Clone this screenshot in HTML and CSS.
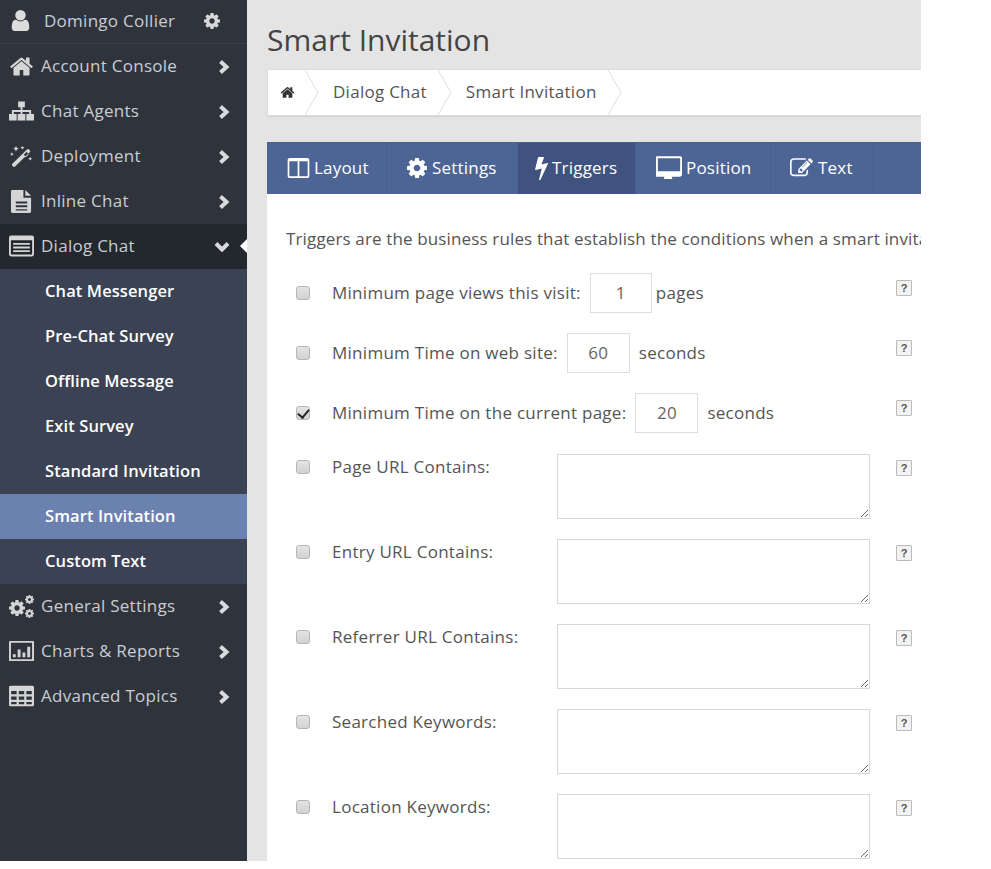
FILE: index.html
```html
<!DOCTYPE html>
<html lang="en">
<head>
<meta charset="utf-8">
<title>Smart Invitation</title>
<link rel="stylesheet" href="styles.css">
</head>
<body>
<svg class="defs" width="0" height="0" aria-hidden="true">
  <symbol id="i-right" viewBox="0 0 13 14"><path class="chevron" d="M2.500 1.500 8.500 7 2.500 12.500"/></symbol>
  <symbol id="i-down" viewBox="0 0 16 11"><path class="chevron" d="M2 2.500 8 8.500 14 2.500"/></symbol>
  <symbol id="i-home" viewBox="0 0 1792 1792"><path d="M1472 992v480q0 26-19 45t-45 19h-384v-384h-256v384h-384q-26 0-45-19t-19-45v-480q0-1 .5-3t.5-3l575-474 575 474q1 2 1 6zm223-69l-62 74q-8 9-21 11h-3q-13 0-21-7l-692-577-692 577q-12 8-24 7-13-2-21-11l-62-74q-8-10-7-23.500t11-21.500l719-599q32-26 76-26t76 26l244 204v-195q0-14 9-23t23-9h192q14 0 23 9t9 23v408l219 182q10 8 11 21.500t-7 23.500z"/></symbol>
  <symbol id="i-cog" viewBox="128 128 1536 1536"><path d="M1152 896q0-106-75-181t-181-75-181 75-75 181 75 181 181 75 181-75 75-181zm512-109v222q0 12-8 23t-20 13l-185 28q-19 54-39 91 35 50 107 138 10 12 10 25t-9 23q-27 37-99 108t-94 71q-12 0-26-9l-138-108q-44 23-91 38-16 136-29 186-7 28-36 28h-222q-14 0-24.500-8.500t-11.500-21.500l-28-184q-49-16-90-37l-141 107q-10 9-25 9-14 0-25-11-126-114-165-168-7-10-7-23 0-12 8-23 15-21 51-66.500t54-70.500q-27-50-41-99l-183-27q-13-2-21-12.500t-8-23.500v-222q0-12 8-23t19-13l186-28q14-46 39-92-40-57-107-138-10-12-10-24 0-10 9-23 26-36 98.500-107.500t94.500-71.500q13 0 26 10l138 107q44-23 91-38 16-136 29-186 7-28 36-28h222q14 0 24.500 8.500t11.500 21.500l28 184q49 16 90 37l142-107q9-9 24-9 13 0 25 10 129 119 165 170 7 8 7 22 0 12-8 23-15 21-51 66.500t-54 70.500q26 50 41 98l183 28q13 2 21 12.500t8 23.500z"/></symbol>
  <symbol id="i-user" viewBox="128 128 1536 1536"><path d="M1536 1399q0 109-62.500 187t-150.500 78h-854q-88 0-150.500-78t-62.500-187q0-85 8.500-160.500t31.500-152 58.500-131 94-89 134.500-34.500q131 128 313 128t313-128q76 0 134.500 34.500t94 89 58.500 131 31.500 152 8.500 160.500zm-256-887q0 159-112.500 271.500t-271.500 112.500-271.500-112.500-112.500-271.500 112.500-271.500 271.500-112.500 271.500 112.500 112.500 271.500z"/></symbol>
  <symbol id="i-bolt" viewBox="440 64 910 1664"><path d="M1333 566q18 20 7 44l-540 1157q-13 25-42 25-4 0-14-2-17-5-25.500-19t-4.500-30l197-808-406 101q-4 1-12 1-18 0-31-11-18-15-13-39l201-825q4-14 16-23t28-9h328q19 0 32 12.500t13 29.500q0 8-5 18l-171 463 396-98q8-2 12-2 19 0 34 15z"/></symbol>
  <symbol id="i-desktop" viewBox="0 128 1792 1536"><path d="M1664 1120v-832q0-13-9.500-22.500t-22.500-9.500h-1472q-13 0-22.500 9.500t-9.500 22.500v832q0 13 9.500 22.500t22.500 9.500h1472q13 0 22.500-9.500t9.500-22.500zm128-832v1088q0 66-47 113t-113 47h-544q0 37 16 77.500t32 71 16 43.500q0 26-19 45t-45 19h-512q-26 0-45-19t-19-45q0-14 16-44t32-70 16-78h-544q-66 0-113-47t-47-113v-1088q0-66 47-113t113-47h1632q66 0 113 47t47 113z"/></symbol>
  <symbol id="i-sitemap" viewBox="0 0 26 20"><path d="M9.500 0h7v6h-7zM12 6h2v3h9v4h-2v-2h-7v2h-2v-2H5v2H3V9h9zM0 13h8v7H0zM9 13h8v7H9zM18 13h8v7h-8z"/></symbol>
  <symbol id="i-magic" viewBox="0 0 24 24"><path d="M2 20.500 18 5a1.600 1.600 0 0 1 2.200 0l.8.800a1.600 1.600 0 0 1 0 2.200L5 23.500a1.500 1.500 0 0 1-2.100 0l-.9-.9a1.500 1.500 0 0 1 0-2.100zM14.500 10.500l2.500 2.500 3-3-2.500-2.500zM6 1l1 2 2 1-2 1-1 2-1-2-2-1 2-1zM1.500 8l.7 1.300 1.300.7-1.300.7-.7 1.300-.7-1.300L-.5 10l1.300-.7zM13 1l.7 1.300L15 3l-1.300.7L13 5l-.7-1.300L11 3l1.300-.7zM21.500 13l.7 1.300 1.300.7-1.300.7-.7 1.300-.7-1.300-1.300-.7 1.300-.7z"/></symbol>
  <symbol id="i-file" viewBox="0 0 22 24"><path fill-rule="evenodd" d="M1.500 0H13v8h8v14.500a1.500 1.500 0 0 1-1.500 1.500h-18A1.500 1.500 0 0 1 0 22.500v-21A1.500 1.500 0 0 1 1.500 0zM5 12v2h12v-2zM5 16v2h12v-2zM5 20v1.500h12V20zM15 0l6 6h-6z"/></symbol>
  <symbol id="i-list" viewBox="0 0 24 20"><path fill-rule="evenodd" d="M2 0h20a2 2 0 0 1 2 2v16a2 2 0 0 1-2 2H2a2 2 0 0 1-2-2V2a2 2 0 0 1 2-2zM1.800 4.500v13.200c0 .3.200.5.500.5h19.400c.3 0 .5-.2.500-.5V4.500zM4 7h16v1.800H4zM4 10.500h16v1.800H4zM4 14h16v1.800H4z"/></symbol>
  <symbol id="i-chart" viewBox="0 0 26 21"><path fill-rule="evenodd" d="M1 0h24a1 1 0 0 1 1 1v19a1 1 0 0 1-1 1H1a1 1 0 0 1-1-1V1a1 1 0 0 1 1-1zM2 2v17h22V2zM4 14h3v3H4zM9 9h3v8H9zM14 12h3v5h-3zM19 6h3v11h-3z"/></symbol>
  <symbol id="i-table" viewBox="0 0 23 19"><path fill-rule="evenodd" d="M1.500 0h20A1.500 1.500 0 0 1 23 1.500v16a1.500 1.500 0 0 1-1.500 1.500h-20A1.500 1.500 0 0 1 0 17.500v-16A1.500 1.500 0 0 1 1.500 0zM2 5v3h5V5zM9 5v3h5V5zM16 5v3h5V5zM2 10v3h5v-3zM9 10v3h5v-3zM16 10v3h5v-3zM2 15v2h5v-2zM9 15v2h5v-2zM16 15v2h5v-2z"/></symbol>
  <symbol id="i-columns" viewBox="64 128 1664 1536"><path d="M224 1536h608v-1152h-640v1120q0 13 9.500 22.500t22.500 9.500zm1376-32v-1120h-640v1152h608q13 0 22.500-9.500t9.500-22.500zm128-1216v1216q0 66-47 113t-113 47h-1344q-66 0-113-47t-47-113v-1216q0-66 47-113t113-47h1344q66 0 113 47t47 113z"/></symbol>
  <symbol id="i-edit" viewBox="0 128 1792 1536"><path d="M888 1184l116-116-152-152-116 116v56h96v96h56zm440-720q-16-16-33 1l-350 350q-17 17-1 33t33-1l350-350q17-17 1-33zm80 594v190q0 119-84.500 203.500t-203.500 84.500h-832q-119 0-203.500-84.500t-84.500-203.500v-832q0-119 84.500-203.500t203.500-84.500h832q63 0 117 25 15 7 18 23 3 17-9 29l-49 49q-14 14-32 8-23-6-45-6h-832q-66 0-113 47t-47 113v832q0 66 47 113t113 47h832q66 0 113-47t47-113v-126q0-13 9-22l64-64q15-15 35-7t20 29zm-96-738l288 288-672 672h-288v-288zm444 132l-92 92-288-288 92-92q28-28 68-28t68 28l152 152q28 28 28 68t-28 68z"/></symbol>
</svg>

<div class="app">
  <nav class="side">
    <div class="user">
      <svg class="ico-user"><use href="#i-user"/></svg>
      <span class="user-name">Domingo Collier</span>
      <svg class="ico-usercog"><use href="#i-cog"/></svg>
    </div>
    <ul class="menu">
      <li class="item"><svg class="ico ico-home"><use href="#i-home"/></svg><span class="item-label">Account Console</span><svg class="arrow"><use href="#i-right"/></svg></li>
      <li class="item"><svg class="ico"><use href="#i-sitemap"/></svg><span class="item-label">Chat Agents</span><svg class="arrow"><use href="#i-right"/></svg></li>
      <li class="item"><svg class="ico"><use href="#i-magic"/></svg><span class="item-label">Deployment</span><svg class="arrow"><use href="#i-right"/></svg></li>
      <li class="item"><svg class="ico ico-file"><use href="#i-file"/></svg><span class="item-label">Inline Chat</span><svg class="arrow"><use href="#i-right"/></svg></li>
      <li class="item item-open"><svg class="ico"><use href="#i-list"/></svg><span class="item-label">Dialog Chat</span><svg class="arrow arrow-down"><use href="#i-down"/></svg><span class="notch"></span></li>
      <li class="sub">Chat Messenger</li>
      <li class="sub">Pre-Chat Survey</li>
      <li class="sub">Offline Message</li>
      <li class="sub">Exit Survey</li>
      <li class="sub">Standard Invitation</li>
      <li class="sub sub-active">Smart Invitation</li>
      <li class="sub">Custom Text</li>
      <li class="item">
        <span class="ico cogs"><svg class="cog-big"><use href="#i-cog"/></svg><svg class="cog-a"><use href="#i-cog"/></svg><svg class="cog-b"><use href="#i-cog"/></svg></span>
        <span class="item-label">General Settings</span><svg class="arrow"><use href="#i-right"/></svg>
      </li>
      <li class="item"><svg class="ico"><use href="#i-chart"/></svg><span class="item-label">Charts &amp; Reports</span><svg class="arrow"><use href="#i-right"/></svg></li>
      <li class="item"><svg class="ico"><use href="#i-table"/></svg><span class="item-label">Advanced Topics</span><svg class="arrow"><use href="#i-right"/></svg></li>
    </ul>
  </nav>

  <main class="main">
    <h1 class="title">Smart Invitation</h1>
    <div class="crumbs">
      <svg class="crumb-home"><use href="#i-home"/></svg>
      <svg class="chev" viewBox="0 0 14 46" preserveAspectRatio="none"><path d="M0 0 13 23 0 46"/></svg>
      <span class="crumb">Dialog Chat</span>
      <svg class="chev" viewBox="0 0 14 46" preserveAspectRatio="none"><path d="M0 0 13 23 0 46"/></svg>
      <span class="crumb">Smart Invitation</span>
      <svg class="chev" viewBox="0 0 14 46" preserveAspectRatio="none"><path d="M0 0 13 23 0 46"/></svg>
    </div>

    <div class="tabs">
      <div class="tab"><svg class="tab-ico t-columns"><use href="#i-columns"/></svg>Layout</div>
      <div class="tab"><svg class="tab-ico t-cog"><use href="#i-cog"/></svg>Settings</div>
      <div class="tab tab-active"><svg class="tab-ico t-bolt"><use href="#i-bolt"/></svg>Triggers</div>
      <div class="tab"><svg class="tab-ico t-desktop"><use href="#i-desktop"/></svg>Position</div>
      <div class="tab tab-text"><svg class="tab-ico t-edit"><use href="#i-edit"/></svg>Text</div>
    </div>

    <section class="panel">
      <p class="intro">Triggers are the business rules that establish the conditions when a smart invitation is displayed to the visitor.</p>

      <div class="row">
        <input class="cb" type="checkbox"><span class="lbl">Minimum page views this visit:</span>
        <input class="num num-tight" type="text" value="1"><span class="unit">pages</span><span class="help">?</span>
      </div>
      <div class="row">
        <input class="cb" type="checkbox"><span class="lbl">Minimum Time on web site:</span>
        <input class="num" type="text" value="60"><span class="unit">seconds</span><span class="help">?</span>
      </div>
      <div class="row">
        <input class="cb" type="checkbox" checked><span class="lbl">Minimum Time on the current page:</span>
        <input class="num" type="text" value="20"><span class="unit">seconds</span><span class="help">?</span>
      </div>

      <div class="row row-area">
        <input class="cb" type="checkbox"><span class="lbl lbl-fixed">Page URL Contains:</span>
        <textarea class="area"></textarea><span class="help">?</span>
      </div>
      <div class="row row-area">
        <input class="cb" type="checkbox"><span class="lbl lbl-fixed">Entry URL Contains:</span>
        <textarea class="area"></textarea><span class="help">?</span>
      </div>
      <div class="row row-area">
        <input class="cb" type="checkbox"><span class="lbl lbl-fixed">Referrer URL Contains:</span>
        <textarea class="area"></textarea><span class="help">?</span>
      </div>
      <div class="row row-area">
        <input class="cb" type="checkbox"><span class="lbl lbl-fixed">Searched Keywords:</span>
        <textarea class="area"></textarea><span class="help">?</span>
      </div>
      <div class="row row-area">
        <input class="cb" type="checkbox"><span class="lbl lbl-fixed">Location Keywords:</span>
        <textarea class="area"></textarea><span class="help">?</span>
      </div>
    </section>
  </main>
</div>
</body>
</html>
```

FILE: styles.css
```css
* { box-sizing: border-box; }
html, body { margin: 0; padding: 0; background: #fff; }
body { font-family: "Open Sans", "Noto Sans", sans-serif; font-size: 17px; letter-spacing: .27px; color: #555; }
.defs { display: block; height: 0; }
svg { fill: currentColor; display: block; flex: none; }
.chevron { fill: none; stroke: currentColor; stroke-width: 4; }

.app { display: flex; width: 921px; height: 861px; overflow: hidden; }

/* sidebar */
.side { width: 247px; flex: none; background: #2f343c; color: #c9ccd2; }
.user { display: flex; align-items: center; height: 44px; padding: 0 0 2px 10px; border-bottom: 1px solid #3a3f48; }
.ico-user { width: 21px; height: 21px; margin-right: 13px; color: #dcdcdc; }
.user-name { width: 160px; white-space: nowrap; }
.ico-usercog { width: 16px; height: 16px; color: #d8d8d8; }
.menu { list-style: none; margin: 0; padding: 0; }
.item { position: relative; display: flex; align-items: center; height: 45px; padding-left: 9px; padding-bottom: 1px; }
.ico { width: 25px; height: 22px; margin-right: 7px; color: #d5d5d5; }
.ico-home { height: 25px; }
.ico-file { height: 23px; }
.item-label { width: 175px; padding-bottom: 2px; white-space: nowrap; }
.arrow { width: 13px; height: 14px; margin: 1px 0 0 2px; color: #d8dade; }
.arrow-down { width: 16px; height: 11px; margin-left: -2px; }
.item-open { background: #23272e; }
.notch { position: absolute; right: 0; top: 15px; border: 7px solid transparent; border-left-width: 0; border-right-color: #fff; }
.sub { display: flex; align-items: center; height: 45px; padding-left: 45px; padding-bottom: 3px; background: #3b4254; color: #fff; font-size: 16.500px; font-weight: 600; letter-spacing: .1px; white-space: nowrap; }
.sub-active { background: #6b82b1; }
.cogs { position: relative; display: block; }
.cogs svg { position: absolute; }
.cog-big { width: 16px; height: 16px; left: 0; top: 5px; }
.cog-a { width: 9px; height: 9px; left: 16px; top: 0; }
.cog-b { width: 9px; height: 9px; left: 16px; top: 14px; }

/* main */
.main { flex: 1; min-width: 0; background: #e4e4e4; padding: 0 0 0 20px; }
.title { margin: 0; height: 69px; padding-top: 19px; font-size: 30px; line-height: 42px; font-weight: 400; letter-spacing: 0; color: #444; white-space: nowrap; }
.crumbs { display: flex; align-items: center; height: 47px; margin-bottom: 26px; padding-left: 12px; background: #fff; border: 1px solid #ddd; border-right: 0; box-shadow: 0 1px 1px rgba(0,0,0,.08); color: #555; }
.crumb-home { width: 15px; height: 15px; color: #333; margin-right: 10px; }
.chev { width: 14px; height: 45px; fill: none; }
.chev path { fill: none; stroke: #ddd; stroke-width: 1; }
.crumb { margin: 0 11px 0 14px; padding-bottom: 2px; white-space: nowrap; }

.tabs { display: grid; grid-template-columns: 120px 131px 118px 135px 102px; height: 52px; background: #4d6595; color: #fff; border-top: 1px solid #47608f; letter-spacing: .2px; }
.tab { display: flex; align-items: center; padding: 0 0 2px 20px; border-right: 1px solid #486090; white-space: nowrap; }
.tab-active { background: #3f5280; padding-left: 17px; }
.tab-text { padding-left: 19px; }
.tab-ico { margin-right: 4px; }
.t-columns { width: 23px; height: 20px; }
.t-cog { width: 20px; height: 20px; margin-right: 5px; }
.t-bolt { width: 13px; height: 24px; }
.t-desktop { width: 26px; height: 23px; }
.t-edit { width: 23px; height: 20px; margin-right: 5px; }

.panel { background: #fff; padding: 34px 9px 0 19px; height: 700px; }
.intro { margin: 0 0 13px; line-height: 22px; letter-spacing: .14px; white-space: nowrap; }

.row { display: flex; align-items: center; height: 60px; }
.row-area { align-items: flex-start; height: 85px; padding-top: 11px; }
.cb { appearance: none; position: relative; width: 14px; height: 14px; margin: 0 22px 0 10px; border: 1px solid #b5b5b5; border-radius: 3px; background: linear-gradient(#e4e4e4, #d2d2d2); flex: none; }
.cb:checked::after { content: ""; position: absolute; left: 3px; top: 0; width: 5px; height: 9px; border: solid #222; border-width: 0 2px 2px 0; transform: rotate(40deg); }
.row-area .cb { margin-top: 6px; }
.lbl, .unit { padding-bottom: 2px; white-space: nowrap; }
.row-area .lbl { padding-bottom: 0; line-height: 22px; margin-top: 2px; }
.lbl-fixed { width: 225px; flex: none; }
.num { width: 63px; height: 40px; margin: 0 9px; padding: 0 0 2px; border: 1px solid #ddd; border-radius: 0; background: #fff; color: #666; font: inherit; letter-spacing: .27px; text-align: center; outline: 0; }
.num-tight { width: 62px; margin-right: 4px; }
.area { display: block; width: 313px; height: 65px; margin: 0; padding: 4px; border: 1px solid #d8d8d8; border-radius: 0; background: #fff; font: inherit; outline: 0; }
.help { display: flex; align-items: center; justify-content: center; width: 16px; height: 16px; margin-left: auto; margin-top: 17px; align-self: flex-start; border: 1px solid #bbb; border-radius: 1px; background: #f2f2f2; color: #555; font-family: "Liberation Sans", sans-serif; font-size: 11px; font-weight: 700; letter-spacing: 0; }
.row-area .help { margin-top: 6px; }
```
